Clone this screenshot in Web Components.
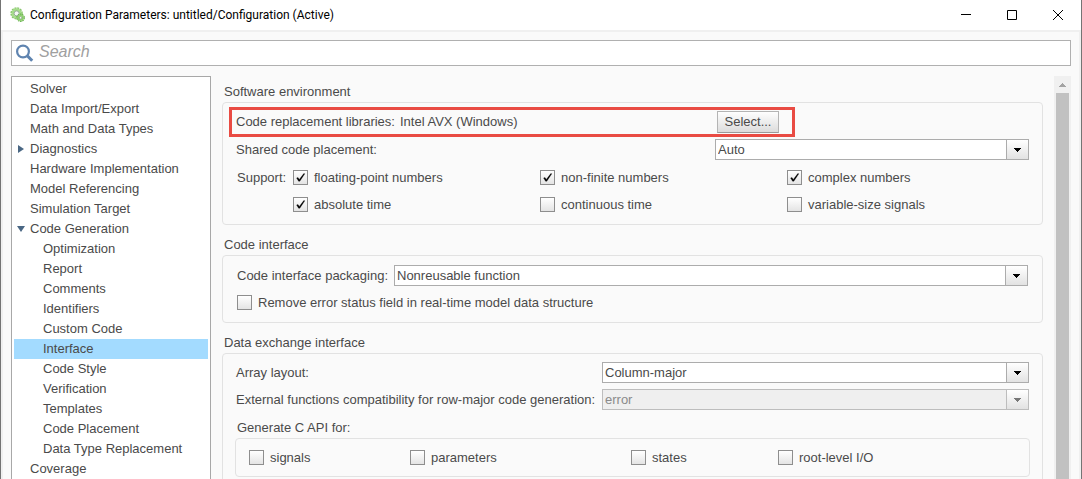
<!DOCTYPE html>
<html lang="en">
<head>
<meta charset="utf-8">
<title>Configuration Parameters: untitled/Configuration (Active)</title>
<style>
  html, body { margin: 0; height: 100%; }
  body { font: 13px/18px "Liberation Sans", Arial, sans-serif; color: #4a4a4a; overflow: hidden; }
</style>
</head>
<body>
<cfg-window>
  <cfg-titlebar slot="title">Configuration Parameters: untitled/Configuration (Active)</cfg-titlebar>
  <cfg-search slot="search"></cfg-search>
  <cfg-tree slot="tree"></cfg-tree>
  <cfg-interface-pane slot="pane"></cfg-interface-pane>
</cfg-window>

<script>
function define(name, html, setup) {
  const template = document.createElement('template');
  template.innerHTML = html;
  customElements.define(name, class extends HTMLElement {
    constructor() {
      super();
      this.attachShadow({ mode: 'open' }).append(template.content.cloneNode(true));
    }
    connectedCallback() {
      if (setup && !this.ready) { this.ready = true; setup(this, this.shadowRoot); }
    }
  });
}

define('cfg-window', `
<style>
  :host { display: flex; flex-direction: column; box-sizing: border-box; height: 100vh; background: #fafafa;
    border: solid #747474; border-width: 0 1px; overflow: hidden; }
  main { flex: 1; min-height: 0; display: flex; flex-direction: column; gap: 10px; box-sizing: border-box;
    padding: 8px 8px 0; border: solid #f0f0f0; border-width: 2px 2px 0; }
  .columns { flex: 1; min-height: 0; display: flex; }
  .tree { flex: none; width: 200px; overflow: hidden; }
  .pane { flex: 1; min-width: 0; overflow: hidden; margin: 0 11px; }
</style>
<slot name="title"></slot>
<main>
  <slot name="search"></slot>
  <div class="columns">
    <div class="tree"><slot name="tree"></slot></div>
    <div class="pane"><slot name="pane"></slot></div>
    <cfg-scrollbar></cfg-scrollbar>
  </div>
</main>`);

define('cfg-titlebar', `
<style>
  :host { flex: none; display: flex; align-items: center; height: 30px; background: #fff; color: #000;
    padding-left: 9px; font: 12px/18px Roboto, "Open Sans", sans-serif; }
  h1 { margin: 0 0 0 4px; flex: 1; font: inherit; white-space: nowrap; }
  button { width: 46px; height: 30px; padding: 0; border: 0; background: none; display: flex; align-items: center; justify-content: center; }
  svg { display: block; }
</style>
<svg width="16" height="16" viewBox="0 0 16 16" aria-hidden="true">
  <circle cx="6.6" cy="6.4" r="5.4" fill="none" stroke="#86c46a" stroke-width="1.6" stroke-dasharray="2 .83"/>
  <circle cx="6.6" cy="6.4" r="3.9" fill="#eef3ee" stroke="#a5dc8a" stroke-width="2.4"/>
  <circle cx="6.6" cy="6.4" r="2.5" fill="#f6f8f6" stroke="#7f9a80" stroke-width=".8"/>
  <circle cx="10.6" cy="10.8" r="3.6" fill="none" stroke="#5faa45" stroke-width="1.3" stroke-dasharray="1.5 .76"/>
  <circle cx="10.6" cy="10.8" r="2.4" fill="#e6f3df" stroke="#8fd070" stroke-width="1.8"/>
  <circle cx="10.6" cy="10.8" r="1.2" fill="#fff" stroke="#5d8a55" stroke-width=".6"/>
</svg>
<h1><slot></slot></h1>
<button aria-label="Minimize"><svg width="10" height="10"><path d="M0 4.5h10" stroke="#000"/></svg></button>
<button aria-label="Maximize"><svg width="10" height="10"><path d="M.5 .5h9v9h-9z" fill="none" stroke="#000"/></svg></button>
<button aria-label="Close"><svg width="10" height="10"><path d="M0 0l10 10M10 0L0 10" stroke="#000"/></svg></button>`);

define('cfg-search', `
<style>
  :host { flex: none; display: flex; align-items: center; box-sizing: border-box; height: 26px; background: #fff; border: 1px solid #b0b0b0; padding-left: 4px; }
  input { flex: 1; min-width: 0; height: 20px; margin-left: 5px; padding: 0 0 2px; border: 0; outline: 0; background: none; font: italic 16px/20px "Liberation Sans", Arial, sans-serif; color: #4a4a4a; }
  input::placeholder { color: #a0a0a0; opacity: 1; }
</style>
<svg width="18" height="18" viewBox="0 0 18 18" aria-hidden="true">
  <circle cx="7" cy="7.5" r="5.9" fill="none" stroke="#5f84b0" stroke-width="2.2"/>
  <path d="M11.4 11.9l4.8 4.8" stroke="#5f84b0" stroke-width="3"/>
</svg>
<input type="text" aria-label="Search" placeholder="Search">`);

define('cfg-scrollbar', `
<style>
  :host { flex: none; display: flex; flex-direction: column; width: 17px; background: #f0f0f0; }
  button { flex: none; height: 17px; padding: 0; border: 0; background: none; display: flex; align-items: center; justify-content: center; }
  .thumb { flex: 1; margin: 0 2px; background: #c1c1c1; }
</style>
<button aria-label="Scroll up"><svg width="7" height="4" shape-rendering="crispEdges"><path d="M0 4L3 0h1l3 4z" fill="#a3a3a3"/></svg></button>
<div class="thumb"></div>`);

define('cfg-tree-item', `
<style>
  :host { display: block; }
  a { display: flex; align-items: center; height: 20px; color: inherit; text-decoration: none; white-space: nowrap; }
  i { flex: none; display: flex; justify-content: center; width: 14px; margin-right: 2px; }
  :host([nested]) i { margin-right: 15px; }
  :host([selected]) a { background: #a3dbff; }
  svg { display: none; fill: #4a6784; }
  :host([state=closed]) .closed, :host([state=open]) .open { display: block; }
</style>
<a href="#"><i>
  <svg class="closed" width="6" height="8"><path d="M0 0l6 4l-6 4z"/></svg>
  <svg class="open" width="8" height="6"><path d="M0 0h8l-4 6z"/></svg>
</i><slot></slot></a>`);

define('cfg-tree', `
<style>
  :host { display: block; background: #fff; border: 1px solid #a8a8a8; padding: 2px; }
</style>
<nav aria-label="Parameter categories">
  <cfg-tree-item>Solver</cfg-tree-item>
  <cfg-tree-item>Data Import/Export</cfg-tree-item>
  <cfg-tree-item>Math and Data Types</cfg-tree-item>
  <cfg-tree-item state="closed">Diagnostics</cfg-tree-item>
  <cfg-tree-item>Hardware Implementation</cfg-tree-item>
  <cfg-tree-item>Model Referencing</cfg-tree-item>
  <cfg-tree-item>Simulation Target</cfg-tree-item>
  <cfg-tree-item state="open">Code Generation</cfg-tree-item>
  <cfg-tree-item nested>Optimization</cfg-tree-item>
  <cfg-tree-item nested>Report</cfg-tree-item>
  <cfg-tree-item nested>Comments</cfg-tree-item>
  <cfg-tree-item nested>Identifiers</cfg-tree-item>
  <cfg-tree-item nested>Custom Code</cfg-tree-item>
  <cfg-tree-item nested selected>Interface</cfg-tree-item>
  <cfg-tree-item nested>Code Style</cfg-tree-item>
  <cfg-tree-item nested>Verification</cfg-tree-item>
  <cfg-tree-item nested>Templates</cfg-tree-item>
  <cfg-tree-item nested>Code Placement</cfg-tree-item>
  <cfg-tree-item nested>Data Type Replacement</cfg-tree-item>
  <cfg-tree-item>Coverage</cfg-tree-item>
</nav>`);

define('cfg-group', `
<style>
  :host { display: block; }
  h2 { margin: 0; padding: 7px 2px 1px; font: inherit; }
  section { border: 1px solid #e2e2e2; border-radius: 4px; padding: 8px 13px 12px; }
</style>
<h2></h2>
<section><slot></slot></section>`, (el, root) => {
  root.querySelector('h2').textContent = el.getAttribute('heading');
});

define('cfg-select', `
<style>
  :host { display: flex; align-items: center; }
  label { flex: none; width: var(--label-width); white-space: nowrap; }
  .box { flex: 1; min-width: 0; display: grid; grid-template-columns: 1fr 23px; }
  select { grid-area: 1 / 1 / 2 / 3; width: 100%; box-sizing: border-box; height: 21px; margin: 0; padding: 0 23px 0 2px; appearance: none;
    background: #fff; border: 1px solid #acacac; border-radius: 0; font: inherit; color: inherit; opacity: 1; }
  .arrow { grid-area: 1 / 2; box-sizing: border-box; height: 21px; display: flex; align-items: center; justify-content: center; pointer-events: none;
    border: 1px solid #acacac; background: linear-gradient(#fff, #e2e2e2); }
  select:disabled { background: #efefef; color: #8a8a8a; border-color: #bdbdbd; }
  select:disabled + .arrow { border-color: #bdbdbd; }
  svg { fill: #000; }
  select:disabled + .arrow svg { fill: #777; }
</style>
<label for="choice"></label>
<div class="box">
  <select id="choice"><option></option></select>
  <span class="arrow"><svg width="7" height="4" shape-rendering="crispEdges"><path d="M0 0h7L4 4H3z"/></svg></span>
</div>`, (el, root) => {
  root.querySelector('label').textContent = el.getAttribute('label');
  root.querySelector('option').textContent = el.getAttribute('value');
  root.querySelector('select').disabled = el.hasAttribute('disabled');
});

define('cfg-check', `
<style>
  :host { display: block; }
  label { display: flex; align-items: center; gap: 6px; height: 15px; white-space: nowrap; }
  .box { flex: none; display: grid; }
  .box > * { grid-area: 1 / 1; }
  input { appearance: none; box-sizing: border-box; width: 15px; height: 15px; margin: 0; border: 1px solid #8e8e8e; background: linear-gradient(#fff, #e4e4e4); }
  svg { display: none; pointer-events: none; }
  input:checked + svg { display: block; }
</style>
<label><span class="box"><input type="checkbox"><svg width="15" height="15"><path d="M3.6 8L5 7.6L6.3 9.4L10.8 3.6L11.8 3.8L6.8 11.2H5.6z" fill="#000" stroke="#000" stroke-width=".3"/></svg></span><slot></slot></label>`, (el, root) => {
  root.querySelector('input').checked = el.hasAttribute('checked');
});

define('cfg-interface-pane', `
<style>
  :host { display: flex; flex-direction: column; gap: 4px; }
  .library { display: flex; align-items: center; box-sizing: border-box; width: 566px; max-width: 100%; margin: -4px 0 2px -7px; height: 30px;
    border: 3px solid #e94b43; padding: 0 13px 0 4px; white-space: nowrap; }
  .library span { margin-left: 5px; flex: 1; }
  .library button { box-sizing: border-box; width: 62px; height: 22px; padding: 0; font: inherit; color: inherit; border: 1px solid #b4b4b4; border-bottom-color: #9a9a9a; background: linear-gradient(#fefefe, #dcdcdc); }
  .placement { --label-width: 479px; }
  .packaging { --label-width: 157px; margin: 1px 1px 9px 1px; }
  .exchange { --label-width: 366px; margin-bottom: 6px; }
  .support { display: flex; gap: 6px; margin: 10px -5px 0 1px; line-height: 15px; }
  .support > span { width: 50px; }
  .support > div { flex: 1; display: grid; grid-template-columns: repeat(3, 1fr); row-gap: 12px; }
  .remove { margin-left: 1px; }
  h3 { margin: 9px 0 1px 1px; font: inherit; }
  .api { display: grid; grid-template-columns: 161fr 221fr 147fr 251fr; border: 1px solid #e2e2e2; border-radius: 4px;
    margin: 0 -1px; padding: 11px 0 11px 13px; }
</style>
<cfg-group heading="Software environment">
  <div class="library">Code replacement libraries: <span>Intel AVX (Windows)</span><button>Select...</button></div>
  <cfg-select class="placement" label="Shared code placement:" value="Auto"></cfg-select>
  <div class="support">
    <span>Support:</span>
    <div>
      <cfg-check checked>floating-point numbers</cfg-check>
      <cfg-check checked>non-finite numbers</cfg-check>
      <cfg-check checked>complex numbers</cfg-check>
      <cfg-check checked>absolute time</cfg-check>
      <cfg-check>continuous time</cfg-check>
      <cfg-check>variable-size signals</cfg-check>
    </div>
  </div>
</cfg-group>
<cfg-group heading="Code interface">
  <cfg-select class="packaging" label="Code interface packaging:" value="Nonreusable function"></cfg-select>
  <cfg-check class="remove">Remove error status field in real-time model data structure</cfg-check>
</cfg-group>
<cfg-group heading="Data exchange interface">
  <cfg-select class="exchange" label="Array layout:" value="Column-major"></cfg-select>
  <cfg-select class="exchange" label="External functions compatibility for row-major code generation:" value="error" disabled></cfg-select>
  <h3>Generate C API for:</h3>
  <div class="api">
    <cfg-check>signals</cfg-check>
    <cfg-check>parameters</cfg-check>
    <cfg-check>states</cfg-check>
    <cfg-check>root-level I/O</cfg-check>
  </div>
</cfg-group>`);
</script>
</body>
</html>
